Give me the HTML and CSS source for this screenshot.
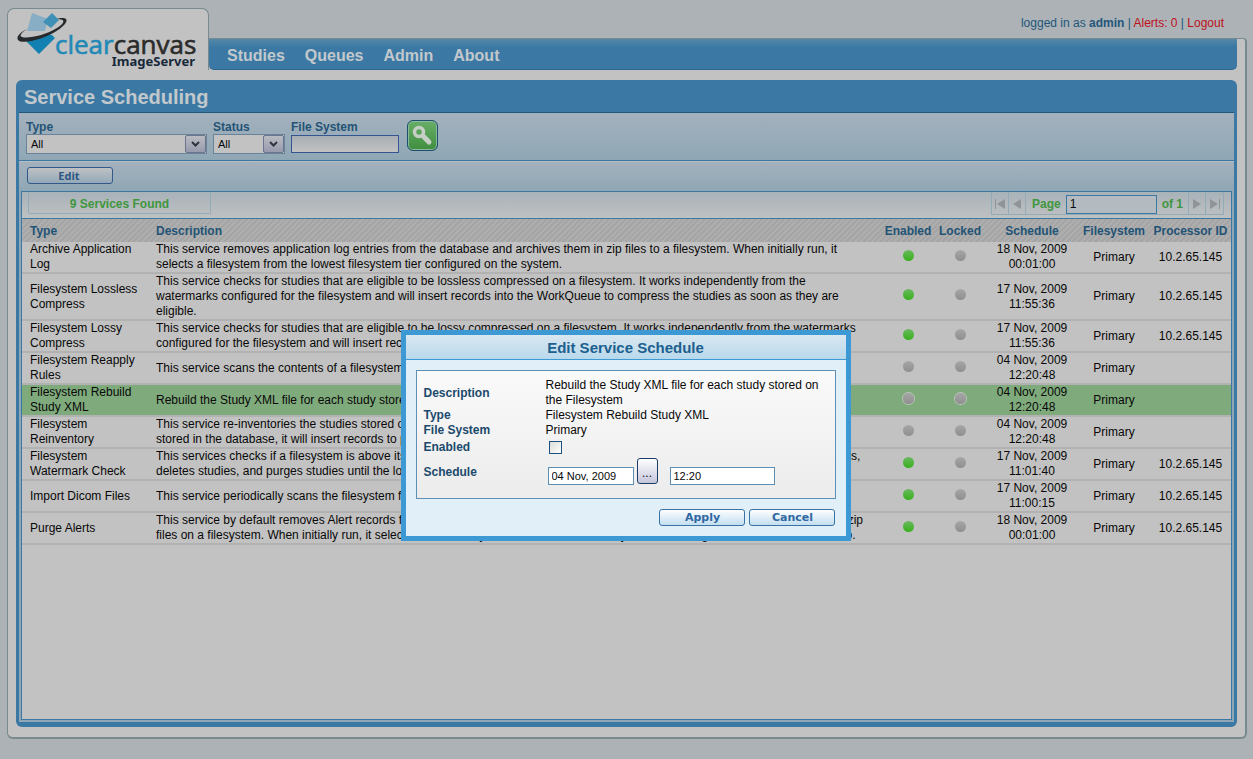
FILE: index.html
```html
<!DOCTYPE html>
<html lang="en">
<head>
<meta charset="utf-8">
<title>ClearCanvas ImageServer - Service Scheduling</title>
<link rel="stylesheet" href="styles.css">
</head>
<body>
<div class="app">
  <header class="header">
    <div class="brand">
      <svg class="logo" width="190" height="60" viewBox="0 0 190 60" role="img" aria-label="ClearCanvas ImageServer">
        <path d="M15 2L31 8L28 20L10 20Z" fill="#88aec5"/>
        <path d="M35 2L42 9L34 17L26 11Z" fill="#3e90b6"/>
        <path d="M8 29L17 27L24 22L35 24L38 27L22 43Z" fill="#1280b0"/>
        <path d="M3 27C16 27 32 22 45 14" fill="none" stroke="#c2c2c2" stroke-width="4"/>
        <path d="M10 18C2 22 -1 26 1 29C5 34 28 28 41 19C51 12 53 6 43 7L40 8C49 8 48 12 40 17C29 24 11 28 5 26C2 25 4 22 10 18Z" fill="#262a2d"/>
        <text class="logo-name" x="38" y="43"><tspan class="logo-clear">clear</tspan><tspan class="logo-canvas">canvas</tspan></text>
        <text class="logo-product" x="178" y="55" text-anchor="end">ImageServer</text>
      </svg>
    </div>
    <div class="header-main">
      <div class="user">logged in as <b>admin</b> | <a href="#">Alerts: 0</a> | <a href="#">Logout</a></div>
      <div class="nav-frame">
        <nav class="nav"><a href="#">Studies</a><a href="#">Queues</a><a href="#">Admin</a><a href="#">About</a></nav>
      </div>
    </div>
  </header>
  <main class="shell">
    <section class="panel">
      <h1 class="panel-title">Service Scheduling</h1>
      <form class="filters">
        <div class="field">
          <label for="type">Type</label>
          <span class="select select-type"><select id="type"><option>All</option></select><span class="arrow"><svg width="9" height="6" viewBox="0 0 9 6"><path d="M1 1L4.500 4.500L8 1" fill="none" stroke="#2e353c" stroke-width="2"/></svg></span></span>
        </div>
        <div class="field">
          <label for="status">Status</label>
          <span class="select select-status"><select id="status"><option>All</option></select><span class="arrow"><svg width="9" height="6" viewBox="0 0 9 6"><path d="M1 1L4.500 4.500L8 1" fill="none" stroke="#2e353c" stroke-width="2"/></svg></span></span>
        </div>
        <div class="field">
          <label for="fs">File System</label>
          <input id="fs" class="fs-input" type="text">
        </div>
        <button class="search" type="button" aria-label="Search"><svg width="22" height="22" viewBox="0 0 22 22"><circle cx="7" cy="7" r="4.500" fill="none" stroke="#c6cfc6" stroke-width="3.500"/><path d="M11 11L17 17" stroke="#c6cfc6" stroke-width="5" stroke-linecap="round"/></svg></button>
      </form>
      <div class="work">
        <div class="toolbar"><button class="btn btn-dim" type="button">Edit</button></div>
        <div class="grid">
          <div class="grid-top">
            <div class="count">9 Services Found</div>
            <div class="pager">
              <button type="button" aria-label="First page"><svg width="10" height="10" viewBox="0 0 10 10"><path d="M0 0H1V10H0ZM10 0V10L2 5Z"/></svg></button>
              <button type="button" aria-label="Previous page"><svg width="8" height="10" viewBox="0 0 8 10"><path d="M8 0V10L0 5Z"/></svg></button>
              <label for="page">Page</label>
              <input id="page" type="text" value="1">
              <span class="of">of 1</span>
              <button type="button" aria-label="Next page"><svg width="8" height="10" viewBox="0 0 8 10"><path d="M0 0V10L8 5Z"/></svg></button>
              <button type="button" aria-label="Last page"><svg width="10" height="10" viewBox="0 0 10 10"><path d="M9 0H10V10H9ZM0 0V10L8 5Z"/></svg></button>
            </div>
          </div>
          <table class="services">
            <colgroup><col class="c-type"><col><col class="c-enabled"><col class="c-locked"><col class="c-schedule"><col class="c-fs"><col class="c-proc"></colgroup>
            <thead><tr><th class="left">Type</th><th class="left">Description</th><th>Enabled</th><th>Locked</th><th>Schedule</th><th>Filesystem</th><th>Processor ID</th></tr></thead>
            <tbody>
              <tr><td class="left">Archive Application<br>Log</td><td class="left">This service removes application log entries from the database and archives them in zip files to a filesystem. When initially run, it<br>selects a filesystem from the lowest filesystem tier configured on the system.</td><td><i class="dot on"></i></td><td><i class="dot"></i></td><td>18 Nov, 2009<br>00:01:00</td><td>Primary</td><td>10.2.65.145</td></tr>
              <tr><td class="left">Filesystem Lossless<br>Compress</td><td class="left">This service checks for studies that are eligible to be lossless compressed on a filesystem. It works independently from the<br>watermarks configured for the filesystem and will insert records into the WorkQueue to compress the studies as soon as they are<br>eligible.</td><td><i class="dot on"></i></td><td><i class="dot"></i></td><td>17 Nov, 2009<br>11:55:36</td><td>Primary</td><td>10.2.65.145</td></tr>
              <tr><td class="left">Filesystem Lossy<br>Compress</td><td class="left">This service checks for studies that are eligible to be lossy compressed on a filesystem. It works independently from the watermarks<br>configured for the filesystem and will insert records into the WorkQueue to compress the studies.</td><td><i class="dot on"></i></td><td><i class="dot"></i></td><td>17 Nov, 2009<br>11:55:36</td><td>Primary</td><td>10.2.65.145</td></tr>
              <tr><td class="left">Filesystem Reapply<br>Rules</td><td class="left">This service scans the contents of a filesystem and reapplies rules to the studies.</td><td><i class="dot"></i></td><td><i class="dot"></i></td><td>04 Nov, 2009<br>12:20:48</td><td>Primary</td><td></td></tr>
              <tr class="selected"><td class="left">Filesystem Rebuild<br>Study XML</td><td class="left">Rebuild the Study XML file for each study stored on the Filesystem</td><td><i class="dot"></i></td><td><i class="dot"></i></td><td>04 Nov, 2009<br>12:20:48</td><td>Primary</td><td></td></tr>
              <tr><td class="left">Filesystem<br>Reinventory</td><td class="left">This service re-inventories the studies stored on a filesystem. When a new study folder is found on a filesystem that is not currently<br>stored in the database, it will insert records to process the study.</td><td><i class="dot"></i></td><td><i class="dot"></i></td><td>04 Nov, 2009<br>12:20:48</td><td>Primary</td><td></td></tr>
              <tr><td class="left">Filesystem<br>Watermark Check</td><td class="left">This services checks if a filesystem is above its configured high watermark. When it is above this high watermark, it migrates studies,<br>deletes studies, and purges studies until the low watermark is reached.</td><td><i class="dot on"></i></td><td><i class="dot"></i></td><td>17 Nov, 2009<br>11:01:40</td><td>Primary</td><td>10.2.65.145</td></tr>
              <tr><td class="left">Import Dicom Files</td><td class="left">This service periodically scans the filesystem for new DICOM files to import.</td><td><i class="dot on"></i></td><td><i class="dot"></i></td><td>17 Nov, 2009<br>11:00:15</td><td>Primary</td><td>10.2.65.145</td></tr>
              <tr><td class="left">Purge Alerts</td><td class="left">This service by default removes Alert records from the database. It can also be configured to archive the deleted Alert records into zip<br>files on a filesystem. When initially run, it selects the first filesystem from the lowest filesystem tier configured to archive alert files to.</td><td><i class="dot on"></i></td><td><i class="dot"></i></td><td>18 Nov, 2009<br>00:01:00</td><td>Primary</td><td>10.2.65.145</td></tr>
            </tbody>
          </table>
        </div>
      </div>
    </section>
  </main>
</div>
<div class="dialog" role="dialog" aria-labelledby="dialog-title">
  <h2 id="dialog-title" class="dialog-title">Edit Service Schedule</h2>
  <form class="dialog-body">
    <div class="form">
      <span class="label">Description</span><span>Rebuild the Study XML file for each study stored on<br>the Filesystem</span>
      <span class="label">Type</span><span>Filesystem Rebuild Study XML</span>
      <span class="label">File System</span><span>Primary</span>
      <label class="label" for="enabled">Enabled</label><span class="check-cell"><input id="enabled" class="check" type="checkbox"></span>
      <label class="label" for="date">Schedule</label>
      <span class="schedule"><input id="date" class="date" type="text" value="04 Nov, 2009"><button class="pick" type="button" aria-label="Choose date">...</button><input class="time" type="text" value="12:20" aria-label="Time"></span>
    </div>
    <div class="actions"><button class="btn" type="button">Apply</button><button class="btn" type="button">Cancel</button></div>
  </form>
</div>
</body>
</html>
```
FILE: styles.css
```css
* { box-sizing: border-box; }
body {
  margin: 0;
  background: #acb2b5;
  color: #080808;
  font: 12px/15px "Liberation Sans", Arial, sans-serif;
}
a { text-decoration: none; }
button, input, select { font: inherit; color: inherit; }
.app {
  display: flex;
  flex-direction: column;
  min-height: 100vh;
  padding: 8px 6px 20px 7px;
}
.header { display: flex; }
.brand {
  width: 202px;
  height: 62px;
  padding: 2px 9px;
  background: #c2c2c2;
  border: 1px solid #788a90;
  border-bottom: 0;
  border-radius: 7px 7px 0 0;
}
.logo { display: block; overflow: visible; }
.logo-name { font: 26px "Open Sans", sans-serif; }
.logo-clear { fill: #1f89b7; stroke: #1f89b7; stroke-width: 0.6; }
.logo-canvas { fill: #2b2b2b; stroke: #2b2b2b; stroke-width: 0.6; }
.logo-product { font: bold 13px "Noto Sans", sans-serif; fill: #17293a; }
.header-main {
  flex: 1;
  display: flex;
  flex-direction: column;
  justify-content: space-between;
}
.user { padding: 8px 23px 0 0; text-align: right; color: #23567b; }
.user a { color: #c01020; }
.nav-frame {
  padding-right: 8px;
  background: #c2c2c2;
  border: solid #788a90;
  border-width: 1px 2px 0 0;
  border-radius: 0 4px 0 0;
}
.nav {
  display: flex;
  gap: 20px;
  height: 31px;
  padding: 3px 18px 0;
  align-items: center;
  background: linear-gradient(#5588a8, #3b79a4 8px);
  border-bottom: 1px solid #2d6790;
  border-radius: 0 0 5px 5px;
}
.nav a { color: #c2c8cc; font: bold 16px/20px "Liberation Sans", Arial, sans-serif; }
.shell {
  flex: 1;
  display: flex;
  padding: 10px 8px;
  background: #c2c2c2;
  border: solid #788a90;
  border-width: 0 2px 2px 1px;
  border-radius: 0 0 6px 6px;
}
.panel {
  flex: 1;
  display: flex;
  flex-direction: column;
  padding: 0 3px 5px;
  background: #3b79a4;
  border-radius: 6px;
}
.panel-title {
  margin: 0;
  padding: 6px 5px 4px;
  color: #c2c8cc;
  font: bold 20px/22px "Liberation Sans", Arial, sans-serif;
  border-bottom: 1px solid #22577d;
}
.filters {
  display: flex;
  gap: 6px;
  height: 48px;
  padding: 7px 7px 0;
  background: linear-gradient(#a3b1bd, #8fa7b5);
  border-bottom: 1px solid #3b79a4;
}
.field { display: flex; flex-direction: column; color: #235375; font-weight: bold; }
.field label { line-height: 14px; }
.select {
  position: relative;
  display: flex;
  height: 20px;
  background: #c2c2c2;
  border: 1px solid #6b8399;
}
.select select {
  width: 100%;
  padding: 0 4px;
  color: #080808;
  font-size: 11px;
  font-weight: normal;
  background: none;
  border: 0;
  appearance: none;
}
.select-type { width: 181px; }
.select-status { width: 72px; }
.arrow {
  position: absolute;
  top: 0;
  right: 0;
  bottom: 0;
  display: flex;
  width: 21px;
  align-items: center;
  justify-content: center;
  background: linear-gradient(#b9bcc2, #989aae);
  border: 1px solid #6c7590;
  border-radius: 2px;
  pointer-events: none;
}
.fs-input {
  width: 108px;
  height: 18px;
  margin-top: 1px;
  background: linear-gradient(#a6aeb4, #c2c2c2);
  border: 1px solid #34558f;
}
.search {
  display: flex;
  width: 31px;
  height: 31px;
  margin-left: 2px;
  padding: 0;
  align-items: center;
  justify-content: center;
  background: linear-gradient(#68ae68, #3f8e3f);
  border: 1px solid #1c4f6c;
  border-radius: 6px;
  box-shadow: inset 0 0 0 1px #8cb8a0;
}
.work {
  flex: 1;
  display: flex;
  flex-direction: column;
  padding: 0 2px 2px;
  background: #8fa7b5;
}
.toolbar {
  height: 30px;
  margin: 0 -2px;
  padding: 5px 8px;
  background: linear-gradient(#a3b1bd, #8fa7b5);
  border-top: 1px solid #b5bec5;
}
.btn {
  width: 86px;
  height: 17px;
  padding: 0 0 0 2px;
  color: #2f68a2;
  font: bold 11px/13px "DejaVu Sans", sans-serif;
  background: linear-gradient(#fdfeff, #c3deef);
  border: 1px solid #3a72a5;
  border-radius: 3px;
}
.btn-dim {
  display: block;
  padding: 0 2px 0 0;
  color: #2c5684;
  font: bold 11px/13px "Open Sans", sans-serif;
  background: linear-gradient(#bec1c3, #93a9b8);
  border-color: #32598a;
}
.grid { flex: 1; background: #c2c2c2; border: 1px solid #3b79a4; }
.grid-top {
  display: flex;
  height: 27px;
  padding: 0 7px 0 6px;
  justify-content: space-between;
  background: linear-gradient(#a8b2b9, #bfc1c2);
  border-bottom: 1px solid #3b79a4;
}
.count {
  width: 183px;
  height: 22px;
  color: #3f963f;
  font-weight: bold;
  line-height: 24px;
  text-align: center;
  border: solid #93aab8;
  border-width: 0 1px 1px;
  border-radius: 0 0 2px 2px;
}
.pager {
  display: flex;
  height: 23px;
  align-items: center;
  color: #3f963f;
  font-weight: bold;
  border: solid #93aab8;
  border-width: 0 1px 1px;
}
.pager button {
  display: flex;
  width: 17px;
  height: 22px;
  padding: 2px 0 0;
  align-items: center;
  justify-content: center;
  background: none;
  border: 0;
  border-right: 1px solid #93aab8;
  fill: #8f9496;
}
.pager button:last-child { border-right: 0; }
.pager label { padding: 3px 5px 0 6px; }
.pager input {
  width: 91px;
  height: 19px;
  margin-top: 2px;
  padding: 0 3px;
  color: #080808;
  font-weight: normal;
  background: #b4bbc0;
  border: 1px solid #3b79a4;
}
.of { padding: 3px 5px 0 5px; line-height: 19px; border-right: 1px solid #93aab8; }
.services { width: 100%; border-collapse: separate; border-spacing: 0; table-layout: fixed; }
.c-type { width: 126px; }
.c-enabled { width: 52px; }
.c-locked { width: 52px; }
.c-schedule { width: 92px; }
.c-fs { width: 72px; }
.c-proc { width: 81px; }
.services th {
  height: 23px;
  padding: 1px 0 0;
  color: #235375;
  white-space: nowrap;
}
.services thead tr {
  background: repeating-linear-gradient(135deg, #aeaeae 0 2px, #a5a5a5 2px 4px);
}
.services td { padding: 0; text-align: center; white-space: nowrap; border-bottom: 2px solid #b2b2b2; }
.services .left { padding-left: 8px; text-align: left; }
.services .selected { background: #7fab7c; }
.dot {
  display: block;
  width: 11px;
  height: 11px;
  margin: 0 auto 4px;
  border-radius: 50%;
  background: linear-gradient(#a6a6a6, #8f8f8f);
}
.dot.on { background: linear-gradient(#69b95e, #38b01c); }
.selected .dot { box-shadow: 0 0 0 1px #bcc4bc; }
.dialog {
  position: absolute;
  top: 330px;
  left: calc(50% - 226px);
  width: 450px;
  background: #e1eff8;
  border: 5px solid #3c99d3;
}
.dialog-title {
  margin: 0;
  padding: 5px 0 4px;
  color: #1d5f8e;
  font: bold 15px/15px "Liberation Sans", Arial, sans-serif;
  text-align: center;
  background: linear-gradient(#d9e7f0, #b8d9ec);
  border-bottom: 1px solid #3c99d3;
}
.dialog-body { padding: 10px; }
.form {
  display: grid;
  grid-template-columns: 122px 1fr;
  align-items: center;
  padding: 7px 6px 10px 7px;
  border: 1px solid #5e8fb4;
  background: linear-gradient(#fafafa, #ececec);
}
.label { color: #1b4a6c; font-weight: bold; }
.check-cell { display: flex; height: 19px; padding-left: 3px; align-items: center; }
.check {
  width: 13px;
  height: 13px;
  margin: 0;
  appearance: none;
  border: 1px solid #1c5180;
  background: linear-gradient(135deg, #dcdcd7, #fff);
}
.schedule { display: flex; height: 31px; padding: 1px 0 0 2px; }
.date, .time {
  height: 18px;
  margin-top: 9px;
  padding: 0 3px;
  font-size: 11px;
  background: #fff;
  border: 1px solid #5e8fb4;
}
.date { width: 86px; }
.time { width: 105px; }
.pick {
  width: 21px;
  height: 26px;
  margin: 0 12px 0 3px;
  padding: 4px 0 0;
  background: linear-gradient(#fff, #c5c5dc);
  border: 1px solid #1a3d68;
  border-radius: 3px;
}
.actions { display: flex; gap: 4px; justify-content: flex-end; padding: 10px 1px 0 0; }
```
